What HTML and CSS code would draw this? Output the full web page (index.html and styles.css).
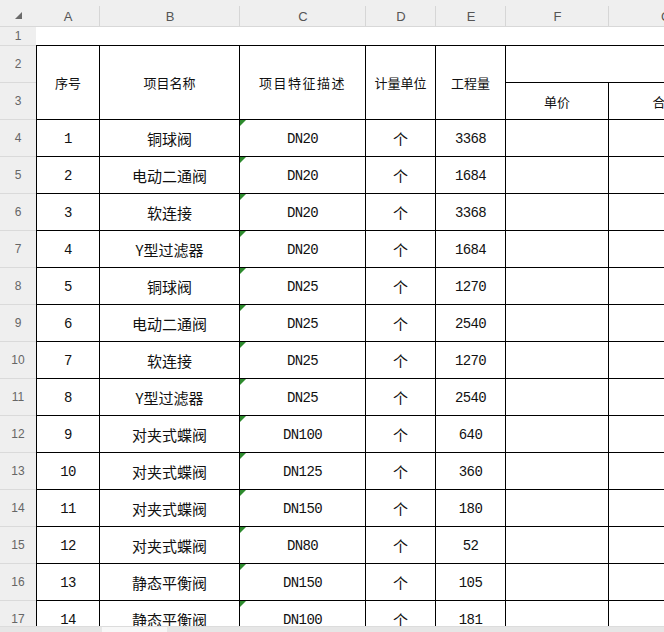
FILE: index.html
```html
<!DOCTYPE html>
<html lang="zh-CN">
<head>
<meta charset="utf-8">
<title>工程量清单</title>
<link rel="stylesheet" href="styles.css">
</head>
<body>
<div class="app">
  <div class="viewport">
    <div class="sheet">
      <div class="ch corner"><svg width="8" height="8" viewBox="0 0 8 8"><polygon points="7,0 7,7 0,7" fill="#6b6b6b"/></svg></div>
      <div class="ch">A</div>
      <div class="ch">B</div>
      <div class="ch">C</div>
      <div class="ch">D</div>
      <div class="ch">E</div>
      <div class="ch">F</div>
      <div class="ch">G</div>

      <div class="rh">1</div>
      <div class="r1"></div>

      <div class="rh">2</div>
      <div class="c hd ca span2">序号</div>
      <div class="c hd span2">项目名称</div>
      <div class="c hd span2 spaced">项目特征描述</div>
      <div class="c hd span2">计量单位</div>
      <div class="c hd span2">工程量</div>
      <div class="c hd fg"></div>
      <div class="rh">3</div>
      <div class="c hd">单价</div>
      <div class="c hd">合价</div>

      <div class="rh">4</div><div class="c ca mono">1</div><div class="c">铜球阀</div><div class="c tri mono">DN20</div><div class="c">个</div><div class="c mono">3368</div><div class="c"></div><div class="c"></div>
      <div class="rh">5</div><div class="c ca mono">2</div><div class="c">电动二通阀</div><div class="c tri mono">DN20</div><div class="c">个</div><div class="c mono">1684</div><div class="c"></div><div class="c"></div>
      <div class="rh">6</div><div class="c ca mono">3</div><div class="c">软连接</div><div class="c tri mono">DN20</div><div class="c">个</div><div class="c mono">3368</div><div class="c"></div><div class="c"></div>
      <div class="rh">7</div><div class="c ca mono">4</div><div class="c">Y型过滤器</div><div class="c tri mono">DN20</div><div class="c">个</div><div class="c mono">1684</div><div class="c"></div><div class="c"></div>
      <div class="rh">8</div><div class="c ca mono">5</div><div class="c">铜球阀</div><div class="c tri mono">DN25</div><div class="c">个</div><div class="c mono">1270</div><div class="c"></div><div class="c"></div>
      <div class="rh">9</div><div class="c ca mono">6</div><div class="c">电动二通阀</div><div class="c tri mono">DN25</div><div class="c">个</div><div class="c mono">2540</div><div class="c"></div><div class="c"></div>
      <div class="rh">10</div><div class="c ca mono">7</div><div class="c">软连接</div><div class="c tri mono">DN25</div><div class="c">个</div><div class="c mono">1270</div><div class="c"></div><div class="c"></div>
      <div class="rh">11</div><div class="c ca mono">8</div><div class="c">Y型过滤器</div><div class="c tri mono">DN25</div><div class="c">个</div><div class="c mono">2540</div><div class="c"></div><div class="c"></div>
      <div class="rh">12</div><div class="c ca mono">9</div><div class="c">对夹式蝶阀</div><div class="c tri mono">DN100</div><div class="c">个</div><div class="c mono">640</div><div class="c"></div><div class="c"></div>
      <div class="rh">13</div><div class="c ca mono">10</div><div class="c">对夹式蝶阀</div><div class="c tri mono">DN125</div><div class="c">个</div><div class="c mono">360</div><div class="c"></div><div class="c"></div>
      <div class="rh">14</div><div class="c ca mono">11</div><div class="c">对夹式蝶阀</div><div class="c tri mono">DN150</div><div class="c">个</div><div class="c mono">180</div><div class="c"></div><div class="c"></div>
      <div class="rh">15</div><div class="c ca mono">12</div><div class="c">对夹式蝶阀</div><div class="c tri mono">DN80</div><div class="c">个</div><div class="c mono">52</div><div class="c"></div><div class="c"></div>
      <div class="rh">16</div><div class="c ca mono">13</div><div class="c">静态平衡阀</div><div class="c tri mono">DN150</div><div class="c">个</div><div class="c mono">105</div><div class="c"></div><div class="c"></div>
      <div class="rh">17</div><div class="c ca mono">14</div><div class="c">静态平衡阀</div><div class="c tri mono">DN100</div><div class="c">个</div><div class="c mono">181</div><div class="c"></div><div class="c"></div>
    </div>
  </div>
  <div class="hbar"><div class="thumb"></div></div>
</div>
</body>
</html>
```

FILE: styles.css
```css
html, body {
  margin: 0;
  padding: 0;
  background: #fff;
}

body {
  overflow: hidden;
  font-family: "Noto Sans CJK SC", sans-serif;
}

.app {
  display: flex;
  flex-direction: column;
  width: 664px;
  height: 632px;
}

.viewport {
  flex: 1;
  min-height: 0;
  overflow: hidden;
}

.sheet {
  display: grid;
  grid-template-columns: 36px 64px 140px 126px 70px 70px 103px 114px;
  grid-template-rows: 27px 19px 37px 37px;
  grid-auto-rows: 37px;
  width: max-content;
}

.ch {
  box-sizing: border-box;
  display: flex;
  align-items: center;
  justify-content: center;
  padding-top: 7px;
  background: linear-gradient(#d6d6d6, #d6d6d6) right bottom / 1px 20px no-repeat, #efefef;
  border-bottom: 1px solid #d8d8d8;
  font: 13px "Liberation Sans", sans-serif;
  color: #555;
}

.corner {
  background: #efefef;
  padding-top: 6px;
  padding-left: 1px;
}

.corner svg {
  display: block;
}

.rh {
  box-sizing: border-box;
  display: flex;
  align-items: center;
  justify-content: center;
  background: #efefef;
  border-bottom: 1px solid #dadada;
  font: 12px "Liberation Sans", sans-serif;
  color: #666;
}

.r1 {
  grid-column: 2 / -1;
  box-sizing: border-box;
  border-bottom: 1px solid #000;
  background: #fff;
}

.c {
  position: relative;
  box-sizing: border-box;
  display: flex;
  align-items: center;
  justify-content: center;
  padding-top: 1px;
  border-right: 1px solid #000;
  border-bottom: 1px solid #000;
  background: #fff;
  font-size: 15px;
  color: #111;
  white-space: nowrap;
}

.ca {
  border-left: 1px solid #000;
}

.hd {
  font-size: 13px;
  padding-top: 0;
}

.span2 {
  grid-row: span 2;
}

.fg {
  grid-column: span 2;
}

.spaced {
  letter-spacing: 1.5px;
}

.mono {
  font-family: "Liberation Mono", monospace;
  font-size: 14px;
  letter-spacing: -0.6px;
}

.tri::before {
  content: "";
  position: absolute;
  left: 0;
  top: 0;
  border-top: 6px solid #2e8b2e;
  border-right: 6px solid transparent;
}

.hbar {
  height: 6px;
  background: #e6e6e6;
  border-top: 1px solid #dcdcdc;
  box-sizing: border-box;
  display: flex;
}

.thumb {
  margin-left: 102px;
  width: 65px;
  background: #f7f7f7;
}
```
